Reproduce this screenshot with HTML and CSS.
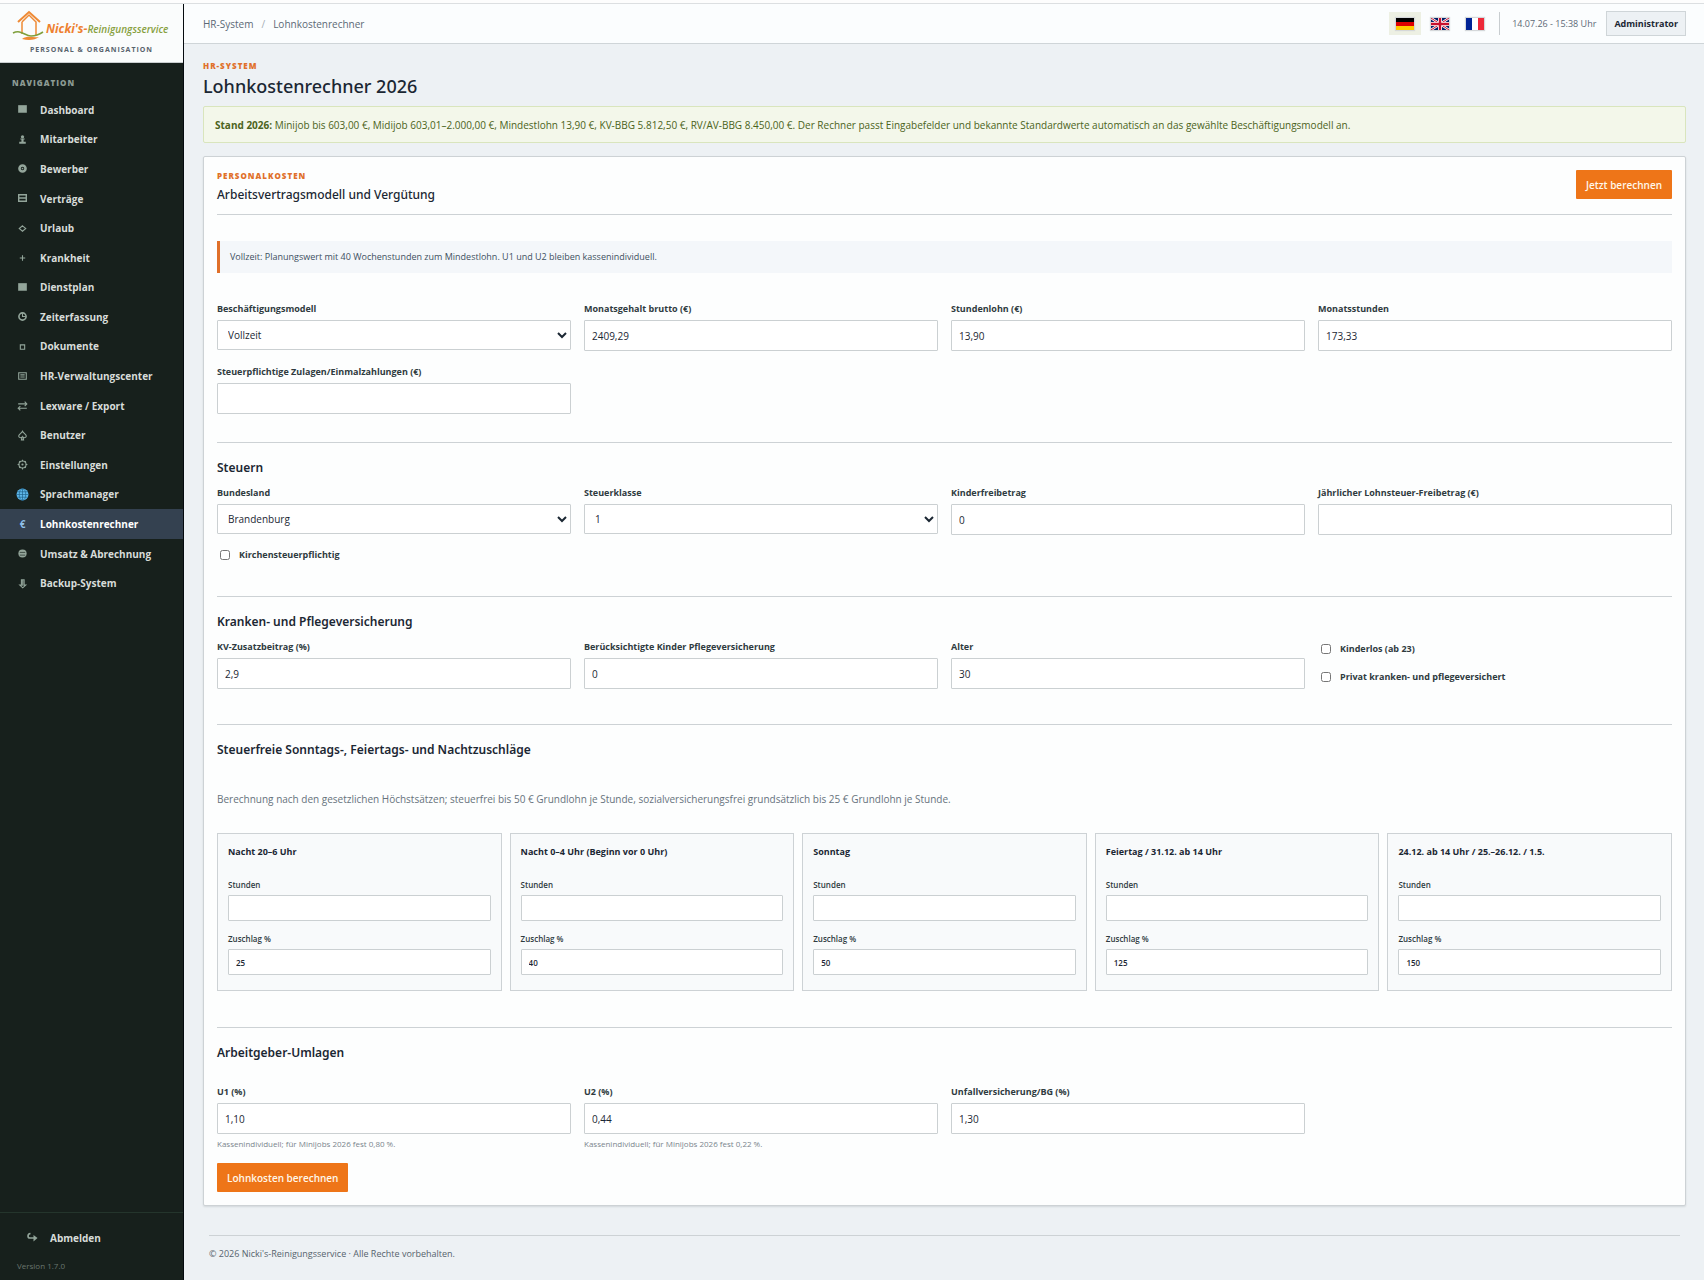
FILE: index.html
```html
<!DOCTYPE html>
<html lang="de">
<head>
	<meta charset="utf-8">
	<title>Lohnkostenrechner 2026</title>
	<meta name="viewport" content="width=device-width, initial-scale=1">
	<link rel="stylesheet" href="styles.css">
</head>
<body>
<div class="app">
	<aside class="sidebar">
		<div class="brand">
			<div class="logo">
				<svg class="logo-house" viewBox="0 0 34 31" width="34" height="31" fill="none">
					<path d="M6 12 17 2l11 10" stroke="#ee8a35" stroke-width="2"/>
					<path d="M10 12v12M10 12l7-7 7 7v13" stroke="#ee8a35" stroke-width="1.500"/>
					<path d="M1 23c8-4 12 3 18 3 4 0 9-2 12-4" stroke="#7f9f3c" stroke-width="1.600"/>
					<path d="M10 29c6-4 10-1 17-2-4 3-10 4-17 2z" fill="#ee8a35"/>
				</svg>
				<span class="logo-text"><b>Nicki's-</b><i>Reinigungsservice</i></span>
			</div>
			<div class="brand-sub">PERSONAL &amp; ORGANISATION</div>
		</div>
		<nav class="nav">
			<div class="nav-title">NAVIGATION</div>
			<ul>
				<li><a href="#"><svg viewBox="0 0 12 12"><path d="M2 2h8v7H2z" fill="currentColor"/></svg>Dashboard</a></li>
				<li><a href="#"><svg viewBox="0 0 12 12"><circle cx="6" cy="3.500" r="1.500" fill="currentColor"/><path d="M4 5h4v1H7v2h2v2H3V8h2V6H4z" fill="currentColor"/></svg>Mitarbeiter</a></li>
				<li><a href="#"><svg viewBox="0 0 12 12"><circle cx="6" cy="6" r="2.800" fill="none" stroke="currentColor" stroke-width="2.400"/><circle cx="6" cy="6" r=".8" fill="currentColor"/></svg>Bewerber</a></li>
				<li><a href="#"><svg viewBox="0 0 12 12"><path d="M2.500 2.500h7v6h-7zM2.500 5.500h7" fill="none" stroke="currentColor" stroke-width="1.300"/></svg>Verträge</a></li>
				<li><a href="#"><svg viewBox="0 0 12 12"><path d="M6 3.500 9 6 6 8.500 3 6z" fill="none" stroke="currentColor"/></svg>Urlaub</a></li>
				<li><a href="#"><svg viewBox="0 0 12 12"><path d="M6 4v5M3.500 6.500h5" stroke="currentColor"/></svg>Krankheit</a></li>
				<li><a href="#"><svg viewBox="0 0 12 12"><path d="M2 2h8v7H2z" fill="currentColor"/></svg>Dienstplan</a></li>
				<li><a href="#"><svg viewBox="0 0 12 12"><circle cx="6" cy="6" r="3.300" fill="none" stroke="currentColor" stroke-width="1.500"/><path d="M6 3v3h3" fill="none" stroke="currentColor"/></svg>Zeiterfassung</a></li>
				<li><a href="#"><svg viewBox="0 0 12 12"><path d="M4 4.500h4v4H4z" fill="none" stroke="currentColor"/></svg>Dokumente</a></li>
				<li><a href="#"><svg viewBox="0 0 12 12"><path d="M2.500 2.500h7v6h-7z" fill="none" stroke="currentColor"/><path d="M4 4h4v1H4zM4 6h4v1H4z" fill="currentColor"/></svg>HR-Verwaltungscenter</a></li>
				<li><a href="#"><svg viewBox="0 0 12 12"><path d="M2 4.500h8M8 2.500l2 2-2 2M10 8.500H2M4 6.500l-2 2 2 2" fill="none" stroke="currentColor"/></svg>Lexware / Export</a></li>
				<li><a href="#"><svg viewBox="0 0 12 12"><path d="M6 2C5 4 2.500 5 2.500 6.500c0 1.500 2 2 3 1L5 10h2l-.5-2.500c1 1 3 .5 3-1C9.500 5 7 4 6 2z" fill="none" stroke="currentColor"/></svg>Benutzer</a></li>
				<li><a href="#"><svg viewBox="0 0 12 12"><circle cx="6" cy="6" r="3.300" fill="none" stroke="currentColor"/><circle cx="6" cy="6" r="1" fill="currentColor"/><path d="M6 1.500V3M6 9v1.500M1.500 6H3M9 6h1.500M3 3l1 1M8 8l1 1M9 3 8 4M4 8 3 9" stroke="currentColor"/></svg>Einstellungen</a></li>
				<li><a href="#"><svg viewBox="0 0 12 12"><circle cx="6" cy="6" r="5.500" fill="#5fb8ea"/><path d="M6 0v12M1 3.500h10M0 6h12M1 8.500h10" stroke="#1d5f86" stroke-width=".6"/><ellipse cx="6" cy="6" rx="3" ry="5.400" fill="none" stroke="#1d5f86" stroke-width=".6"/></svg>Sprachmanager</a></li>
				<li><a href="#" class="active"><span class="sign">€</span>Lohnkostenrechner</a></li>
				<li><a href="#"><svg viewBox="0 0 12 12"><circle cx="6" cy="6" r="3.800" fill="currentColor"/><path d="M3.500 5h5M3.500 7.500h5" stroke="#17201c" stroke-width=".6"/></svg>Umsatz &amp; Abrechnung</a></li>
				<li><a href="#"><svg viewBox="0 0 12 12"><path d="M5 2.500h2.500v5H9L6.200 10 3.500 7.500H5zM6.200 3v5" fill="none" stroke="currentColor"/></svg>Backup-System</a></li>
			</ul>
		</nav>
		<div class="sidebar-bottom">
			<a href="#" class="logout"><svg viewBox="0 0 12 12"><path d="M4.500 1.500C1 2 1.500 6 4 6h4" fill="none" stroke="currentColor" stroke-width="1.600"/><path d="M7.500 3 11.500 6 7.500 9.500z" fill="currentColor"/></svg>Abmelden</a>
			<div class="version">Version 1.7.0</div>
		</div>
	</aside>

	<div class="page">
		<header class="topbar">
			<div class="crumbs"><a href="#">HR-System</a><span class="slash">/</span><span>Lohnkostenrechner</span></div>
			<div class="tools">
				<div class="flags">
					<a href="#" class="flag on" aria-label="Deutsch"><svg viewBox="0 0 18 12" width="18" height="12"><path d="M0 0h18v4H0z" fill="#000"/><path d="M0 4h18v4H0z" fill="#d00"/><path d="M0 8h18v4H0z" fill="#fc0"/></svg></a>
					<a href="#" class="flag" aria-label="English"><svg viewBox="0 0 18 12" width="18" height="12"><path d="M0 0h18v12H0z" fill="#012169"/><path d="M0 0l18 12M18 0 0 12" stroke="#fff" stroke-width="2.400"/><path d="M0 0l18 12M18 0 0 12" stroke="#c8102e" stroke-width="1"/><path d="M9 0v12M0 6h18" stroke="#fff" stroke-width="4"/><path d="M9 0v12M0 6h18" stroke="#c8102e" stroke-width="2.400"/></svg></a>
					<a href="#" class="flag" aria-label="Français"><svg viewBox="0 0 18 12" width="18" height="12"><path d="M0 0h6v12H0z" fill="#002395"/><path d="M6 0h6v12H6z" fill="#fff"/><path d="M12 0h6v12h-6z" fill="#ed2939"/></svg></a>
				</div>
				<div class="clock">14.07.26 - 15:38 Uhr</div>
				<button type="button" class="user">Administrator</button>
			</div>
		</header>

		<main class="content">
			<div class="eyebrow">HR-SYSTEM</div>
			<h1>Lohnkostenrechner 2026</h1>
			<div class="alert"><strong>Stand 2026:</strong> Minijob bis 603,00 €, Midijob 603,01–2.000,00 €, Mindestlohn 13,90 €, KV-BBG 5.812,50 €, RV/AV-BBG 8.450,00 €. Der Rechner passt Eingabefelder und bekannte Standardwerte automatisch an das gewählte Beschäftigungsmodell an.</div>

			<form class="card">
				<div class="card-head">
					<div>
						<div class="eyebrow">PERSONALKOSTEN</div>
						<h2>Arbeitsvertragsmodell und Vergütung</h2>
					</div>
					<button type="button" class="btn">Jetzt berechnen</button>
				</div>
				<div class="note">Vollzeit: Planungswert mit 40 Wochenstunden zum Mindestlohn. U1 und U2 bleiben kassenindividuell.</div>

				<!-- Vergütung -->
				<div class="grid">
					<div class="field">
						<label for="modell">Beschäftigungsmodell</label>
						<select id="modell"><option>Vollzeit</option><option>Teilzeit</option><option>Midijob</option><option>Minijob</option></select>
					</div>
					<div class="field">
						<label for="gehalt">Monatsgehalt brutto (€)</label>
						<input type="text" id="gehalt" value="2409,29">
					</div>
					<div class="field">
						<label for="stundenlohn">Stundenlohn (€)</label>
						<input type="text" id="stundenlohn" value="13,90">
					</div>
					<div class="field">
						<label for="monatsstunden">Monatsstunden</label>
						<input type="text" id="monatsstunden" value="173,33">
					</div>
					<div class="field">
						<label for="zulagen">Steuerpflichtige Zulagen/Einmalzahlungen (€)</label>
						<input type="text" id="zulagen">
					</div>
				</div>

				<!-- Steuern -->
				<div class="section">
					<h3>Steuern</h3>
					<div class="grid">
						<div class="field">
							<label for="land">Bundesland</label>
							<select id="land"><option>Brandenburg</option><option>Berlin</option></select>
						</div>
						<div class="field">
							<label for="klasse">Steuerklasse</label>
							<select id="klasse"><option>1</option><option>2</option><option>3</option><option>4</option><option>5</option><option>6</option></select>
						</div>
						<div class="field">
							<label for="freibetrag">Kinderfreibetrag</label>
							<input type="text" id="freibetrag" value="0">
						</div>
						<div class="field">
							<label for="lohnsteuer">Jährlicher Lohnsteuer-Freibetrag (€)</label>
							<input type="text" id="lohnsteuer">
						</div>
						<label class="check"><input type="checkbox">Kirchensteuerpflichtig</label>
					</div>
				</div>

				<!-- Krankenversicherung -->
				<div class="section">
					<h3>Kranken- und Pflegeversicherung</h3>
					<div class="grid">
						<div class="field">
							<label for="zusatz">KV-Zusatzbeitrag (%)</label>
							<input type="text" id="zusatz" value="2,9">
						</div>
						<div class="field">
							<label for="kinder">Berücksichtigte Kinder Pflegeversicherung</label>
							<input type="text" id="kinder" value="0">
						</div>
						<div class="field">
							<label for="alter">Alter</label>
							<input type="text" id="alter" value="30">
						</div>
						<div class="checks">
							<label class="check"><input type="checkbox">Kinderlos (ab 23)</label>
							<label class="check"><input type="checkbox">Privat kranken- und pflegeversichert</label>
						</div>
					</div>
				</div>

				<!-- Zuschläge -->
				<div class="section">
					<h3>Steuerfreie Sonntags-, Feiertags- und Nachtzuschläge</h3>
					<p class="hint">Berechnung nach den gesetzlichen Höchstsätzen; steuerfrei bis 50 € Grundlohn je Stunde, sozialversicherungsfrei grundsätzlich bis 25 € Grundlohn je Stunde.</p>
					<div class="boxes">
						<div class="box">
							<h4>Nacht 20–6 Uhr</h4>
							<label>Stunden<input type="text"></label>
							<label>Zuschlag %<input type="text" value="25"></label>
						</div>
						<div class="box">
							<h4>Nacht 0–4 Uhr (Beginn vor 0 Uhr)</h4>
							<label>Stunden<input type="text"></label>
							<label>Zuschlag %<input type="text" value="40"></label>
						</div>
						<div class="box">
							<h4>Sonntag</h4>
							<label>Stunden<input type="text"></label>
							<label>Zuschlag %<input type="text" value="50"></label>
						</div>
						<div class="box">
							<h4>Feiertag / 31.12. ab 14 Uhr</h4>
							<label>Stunden<input type="text"></label>
							<label>Zuschlag %<input type="text" value="125"></label>
						</div>
						<div class="box">
							<h4>24.12. ab 14 Uhr / 25.–26.12. / 1.5.</h4>
							<label>Stunden<input type="text"></label>
							<label>Zuschlag %<input type="text" value="150"></label>
						</div>
					</div>
				</div>

				<!-- Umlagen -->
				<div class="section last">
					<h3>Arbeitgeber-Umlagen</h3>
					<div class="grid">
						<div class="field">
							<label for="u1">U1 (%)</label>
							<input type="text" id="u1" value="1,10">
							<small>Kassenindividuell; für Minijobs 2026 fest 0,80 %.</small>
						</div>
						<div class="field">
							<label for="u2">U2 (%)</label>
							<input type="text" id="u2" value="0,44">
							<small>Kassenindividuell; für Minijobs 2026 fest 0,22 %.</small>
						</div>
						<div class="field">
							<label for="bg">Unfallversicherung/BG (%)</label>
							<input type="text" id="bg" value="1,30">
						</div>
					</div>
				</div>
				<button type="button" class="btn">Lohnkosten berechnen</button>
			</form>

			<footer class="footer">© 2026 Nicki's-Reinigungsservice · Alle Rechte vorbehalten.</footer>
		</main>
	</div>
</div>
</body>
</html>
```
FILE: styles.css
```css
* {
	box-sizing: border-box;
}
body {
	margin: 0;
	padding-top: 3px;
	background: #fdfdfd;
	color: #1b2733;
	font: 10px/14px "Open Sans", "Noto Sans", sans-serif;
}
a {
	color: inherit;
	text-decoration: none;
}
h1, h2, h3, h4, p {
	margin: 0;
}
h1, h2, h3 {
	font-family: "Noto Sans", "Open Sans", sans-serif;
}
input, select, button {
	font: inherit;
	color: inherit;
}
.app {
	display: flex;
	min-height: calc(100vh - 3px);
	border-top: 1px solid #dcdfe1;
}

/* sidebar */
.sidebar {
	display: flex;
	flex-direction: column;
	width: 184px;
	flex: none;
	background: #17201c;
	border-right: 1px solid #050a0e;
	color: #d7dcd9;
}
.brand {
	height: 59px;
	padding-top: 6px;
	background: #fafcfc;
	border-bottom: 1px solid #c9ced0;
	text-align: center;
}
.logo {
	display: flex;
	align-items: center;
	height: 31px;
	padding-left: 12px;
}
.logo-house {
	flex: none;
}
.logo-text {
	display: flex;
	align-items: baseline;
	padding-top: 6px;
	font-style: italic;
	white-space: nowrap;
}
.logo-text b {
	color: #ee8030;
	font-size: 12px;
	font-weight: 700;
}
.logo-text i {
	color: #87a03e;
	font-size: 10px;
	font-weight: 600;
}
.brand-sub {
	margin-top: 2px;
	color: #58636d;
	font-size: 7px;
	font-weight: 700;
	letter-spacing: 1px;
}
.nav {
	flex: 1;
	padding-top: 13px;
}
.nav-title {
	padding: 0 12px;
	margin-bottom: 5px;
	color: #8c9b93;
	font-size: 8px;
	font-weight: 800;
	letter-spacing: 1px;
}
.nav ul {
	display: grid;
	grid-auto-rows: 1fr;
	height: 503px;
	margin: 0;
	padding: 0;
	list-style: none;
}
.nav a {
	display: flex;
	align-items: center;
	gap: 11px;
	height: 100%;
	padding-left: 16px;
	font-weight: 700;
}
.nav a.active {
	background: #344150;
	color: #fff;
}
.nav svg, .sign {
	width: 13px;
	height: 13px;
	color: #93a59a;
}
.sign {
	line-height: 13px;
	text-align: center;
}
.active .sign {
	color: #8fbfe8;
}
.sidebar-bottom {
	height: 68px;
	padding: 18px 17px 0;
	border-top: 1px solid #24352c;
}
.logout {
	display: flex;
	align-items: center;
	gap: 12px;
	padding-left: 9px;
	font-weight: 700;
}
.logout svg {
	width: 12px;
	height: 12px;
	color: #93a59a;
}
.version {
	margin-top: 14px;
	color: #6a766f;
	font-size: 8px;
}

/* topbar */
.page {
	flex: 1;
	min-width: 0;
	background: #edf1f4;
}
.topbar {
	display: flex;
	align-items: center;
	justify-content: space-between;
	height: 40px;
	padding: 0 18px 0 19px;
	background: #fbfdfe;
	border-bottom: 1px solid #cfd5d8;
}
.crumbs {
	color: #5b6976;
}
.slash {
	margin: 0 8px;
	color: #a5adb4;
}
.tools, .flags {
	display: flex;
	align-items: center;
}
.flags {
	gap: 3px;
	padding-right: 8px;
	border-right: 1px solid #c8cdd0;
}
.flag {
	display: flex;
	align-items: center;
	justify-content: center;
	width: 32px;
	height: 23px;
}
.flag svg {
	box-shadow: 0 0 1px 1px #d5d8da;
}
.flag.on {
	background: #edf0e3;
}
.clock {
	margin: 0 10px 0 12px;
	color: #5b6976;
	font-size: 9px;
}
.user {
	height: 25px;
	padding: 0 7px;
	background: #edf1f4;
	border: 1px solid #cfd5d8;
	font-size: 9px;
	font-weight: 700;
}

/* content */
.content {
	padding: 16px 18px 0 19px;
}
.eyebrow {
	color: #e0702a;
	font-size: 8px;
	line-height: 12px;
	font-weight: 800;
	letter-spacing: 1px;
}
h1 {
	margin-top: 1px;
	font-size: 18px;
	line-height: 26px;
	font-weight: 500;
}
.alert {
	margin: 7px 0 13px;
	padding: 11px 11px 10px;
	background: #f3f7ea;
	border: 1px solid #d9e5bd;
	border-radius: 2px;
	color: #4b6320;
}
.card {
	padding: 13px;
	background: #fdfefe;
	border: 1px solid #cdd2d5;
	border-radius: 2px;
	box-shadow: 0 1px 2px rgba(20, 30, 40, .12);
}
.card-head {
	display: flex;
	align-items: flex-start;
	justify-content: space-between;
	height: 45px;
	border-bottom: 1px solid #cdd2d5;
}
h2 {
	margin-top: 4px;
	font-size: 12px;
	line-height: 18px;
	font-weight: 500;
}
.btn {
	height: 29px;
	padding: 0 10px;
	background: #ee7518;
	border: 0;
	border-radius: 1px;
	color: #fff7ea;
	font-weight: 600;
}
.note {
	margin: 26px 0 29px;
	padding: 9px 10px;
	background: #f4f7fa;
	border-left: 3px solid #e0702a;
	color: #40505f;
	font-size: 9px;
}
.grid {
	display: grid;
	grid-template-columns: repeat(4, 1fr);
	gap: 14px 13px;
	align-items: start;
}
.field {
	display: flex;
	flex-direction: column;
}
.field label, .check {
	color: #2f3b3f;
	font-size: 9px;
	font-weight: 700;
}
.field label {
	margin-bottom: 4px;
}
input[type=text], select {
	width: 100%;
	height: 31px;
	background: #fff;
	border: 1px solid #cbd0d2;
	border-radius: 1px;
	padding: 0 7px;
}
select {
	height: 30px;
	padding: 0 0 0 6px;
}
.check {
	display: flex;
	align-items: center;
	gap: 9px;
	height: 12px;
}
.check input {
	width: 10px;
	height: 10px;
	margin: 0 0 0 3px;
}
.checks {
	display: grid;
	gap: 16px;
	padding-top: 3px;
}
.section {
	margin-top: 28px;
	padding-top: 17px;
	border-top: 1px solid #cdd2d5;
}
.section + .section {
	margin-top: 35px;
}
h3 {
	margin-bottom: 10px;
	font-size: 12px;
	line-height: 16px;
	font-weight: 600;
}
.hint {
	margin: 34px 0 27px;
	color: #66727c;
}
.boxes {
	display: grid;
	grid-template-columns: repeat(5, 1fr);
	gap: 8px;
}
.box {
	height: 158px;
	padding: 11px 10px;
	background: #f8fafb;
	border: 1px solid #cdd2d5;
}
.box h4 {
	margin-bottom: 20px;
	font-size: 9px;
	font-weight: 700;
}
.box label {
	display: block;
	margin-bottom: 12px;
	color: #2f3b3f;
	font-size: 8px;
	line-height: 12px;
	font-weight: 600;
}
.box input[type=text] {
	display: block;
	height: 26px;
	margin-top: 4px;
	color: #1b2733;
}
.section.last {
	margin-top: 36px;
}
.last h3 {
	margin-bottom: 24px;
}
.field small {
	margin-top: 4px;
	color: #7a858d;
	font-size: 8px;
	line-height: 12px;
}
.last + .btn {
	margin-top: 13px;
}
.footer {
	margin: 29px 6px 0;
	padding-top: 11px;
	border-top: 1px solid #cdd2d5;
	color: #56636d;
	font-size: 9px;
}
```
